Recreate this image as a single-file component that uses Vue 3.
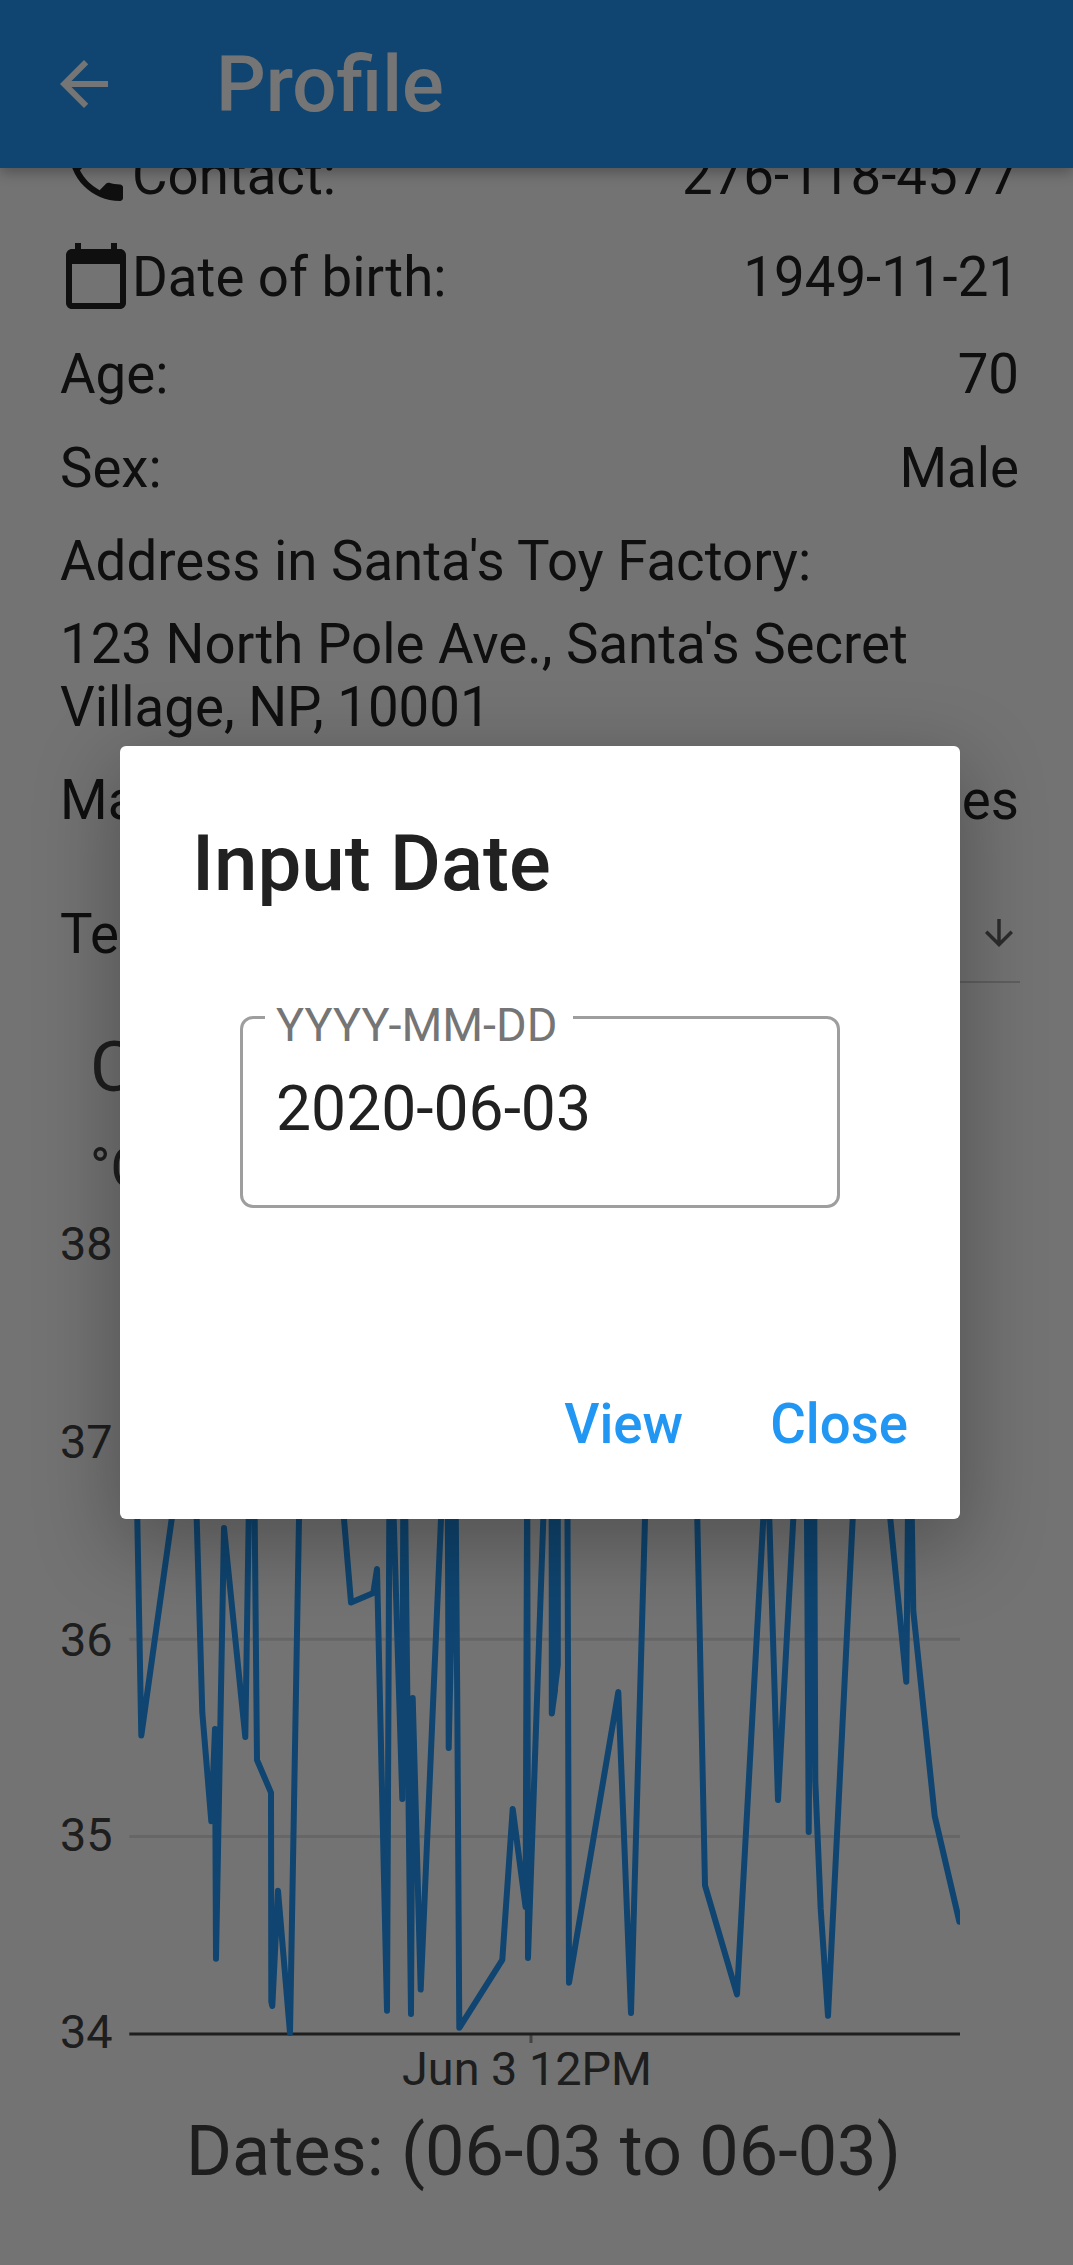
<script setup>
const details = [
  { icon: 'phone', label: 'Contact:', value: '276-118-4577' },
  { icon: 'calendar', label: 'Date of birth:', value: '1949-11-21' },
  { label: 'Age:', value: '70' },
  { label: 'Sex:', value: 'Male' },
  { label: "Address in Santa's Toy Factory:", value: '' },
]

const icons = {
  phone:
    'M6.62 10.79c1.44 2.83 3.76 5.14 6.59 6.59l2.2-2.2c.27-.27.67-.36 1.02-.24 1.12.37 2.33.57 3.57.57.55 0 1 .45 1 1V20c0 .55-.45 1-1 1-9.39 0-17-7.61-17-17 0-.55.45-1 1-1h3.5c.55 0 1 .45 1 1 0 1.25.2 2.45.57 3.57.11.35.03.74-.25 1.02l-2.2 2.2z',
  calendar:
    'M20 3h-1V1h-2v2H7V1H5v2H4c-1.1 0-2 .9-2 2v16c0 1.1.9 2 2 2h16c1.1 0 2-.9 2-2V5c0-1.1-.9-2-2-2zm0 18H4V8h16v13z',
}

const ticks = [
  { label: '38', y: 1244.4, text: 1259.6 },
  { label: '37', y: 1441.8, text: 1457.6 },
  { label: '36', y: 1639.2, text: 1655.6 },
  { label: '35', y: 1836.6, text: 1850.6 },
  { label: '34', y: 2034, text: 2048.4 },
]

const readings = [
  [135.5, 1400], [137.3, 1519], [141.3, 1735.5], [171.7, 1519], [184, 1430],
  [196.7, 1519], [202.3, 1712.6], [211.3, 1821.2], [215, 1729], [216, 1958.7],
  [224, 1528], [245.3, 1737], [248.7, 1519], [251.5, 1400], [254.7, 1519],
  [257, 1760], [271, 1792.6], [271.3, 2001.6], [272.3, 2006], [278, 1890.8],
  [290, 2033], [299, 1519], [320, 1300], [344, 1519], [351, 1602.5],
  [373.3, 1593], [377, 1569], [387, 2010.7], [389.3, 1519], [391.5, 1420],
  [393.7, 1519], [402.3, 1799], [403.2, 1519], [404.5, 1400], [405.3, 1519],
  [411, 2014], [412.7, 1698], [420.7, 1989.5], [441, 1519], [444.5, 1420],
  [447.9, 1519], [448.7, 1748], [453.8, 1519], [455, 1400], [455.8, 1519],
  [457.3, 1705], [459.3, 2027.8], [502.3, 1959.8], [512.7, 1809], [525.6, 1907],
  [527, 1519], [527.2, 1400], [527.3, 1519], [528, 1958], [543.3, 1519],
  [547, 1400], [551.7, 1519], [551.8, 1713.4], [555, 1690], [555, 1400],
  [557.8, 1519], [557.8, 1665], [551.9, 1713.4], [555, 1500], [560, 1300],
  [567.5, 1519], [569, 1982.7], [618.3, 1692], [631, 2013], [645, 1519],
  [670, 1300], [697.3, 1519], [705, 1885.3], [737, 1994.4], [763.3, 1519],
  [766.3, 1440], [769.3, 1519], [778, 1800], [793.3, 1519], [800, 1400],
  [807, 1519], [808.7, 1832], [811, 1519], [811, 1400], [814.3, 1519],
  [815.3, 1781.7], [820.7, 1909], [828, 2015.8], [852.7, 1519], [870, 1300],
  [890.3, 1519], [906.3, 1681.7], [907.9, 1519], [910, 1400], [911.8, 1519],
  [913.3, 1611], [934.7, 1816], [959.4, 1921.7],
]

const linePoints = readings.map((p) => p.join(',')).join(' ')
</script>

<template>
  <div class="screen">
    <header class="app-bar">
      <svg class="icon" viewBox="0 0 24 24">
        <path d="M20 11H7.83l5.59-5.59L12 4l-8 8 8 8 1.41-1.41L7.83 13H20v-2z" />
      </svg>
      <h1>Profile</h1>
    </header>

    <main class="body">
      <div v-for="d in details" :key="d.label" class="row">
        <svg v-if="d.icon" class="icon" viewBox="0 0 24 24"><path :d="icons[d.icon]" /></svg>
        <span>{{ d.label }}</span>
        <span class="value">{{ d.value }}</span>
      </div>
      <p class="address">123 North Pole Ave., Santa's Secret Village, NP, 10001</p>
      <div class="row maladies">
        <span>Maladies:</span>
        <span class="value">Diabetes</span>
      </div>
      <div class="picker">
        <span>Temperature</span>
        <div class="select">
          <svg viewBox="0 0 24 24"><path d="M20 12l-1.41-1.41L13 16.17V4h-2v12.17l-5.58-5.59L4 12l8 8 8-8z" /></svg>
        </div>
      </div>
      <h2>Chart</h2>
      <p class="unit">°C</p>
      <svg class="chart" viewBox="60 1200 960 905">
        <clipPath id="plot"><rect x="129" y="1200" width="831" height="840" /></clipPath>
        <line
          v-for="t in ticks.slice(0, 4)"
          :key="t.label"
          class="grid"
          x1="129.3"
          x2="960"
          :y1="t.y"
          :y2="t.y"
        />
        <line class="tick" x1="531" x2="531" y1="2035" y2="2043" />
        <line class="axis" x1="129.3" x2="960" y1="2034" y2="2034" />
        <polyline class="series" clip-path="url(#plot)" :points="linePoints" />
        <text v-for="t in ticks" :key="t.label" x="112.5" :y="t.text" text-anchor="end">{{ t.label }}</text>
        <text x="527" y="2085" text-anchor="middle">Jun 3 12PM</text>
      </svg>
      <p class="dates">Dates: (06-03 to 06-03)</p>
    </main>

    <div class="scrim">
      <section class="dialog">
        <h3>Input Date</h3>
        <div class="field">
          <label>YYYY-MM-DD</label>
          <span>2020-06-03</span>
        </div>
        <div class="actions">
          <button>View</button>
          <button>Close</button>
        </div>
      </section>
    </div>
  </div>
</template>

<style>
body {
  margin: 0;
}
</style>

<style scoped>
.screen {
  position: relative;
  display: flex;
  flex-direction: column;
  width: 1073px;
  height: 2265px;
  overflow: hidden;
  background: #fafafa;
  color: #212121;
  font-family: Roboto, sans-serif;
  font-size: 54.6px;
  line-height: 63px;
}
h1, h2, h3, p {
  margin: 0;
  font-weight: 400;
}
.icon {
  flex: none;
  width: 72px;
  height: 72px;
  fill: currentColor;
}
.app-bar {
  position: relative;
  z-index: 1;
  flex: none;
  display: flex;
  align-items: center;
  gap: 96px;
  box-sizing: border-box;
  height: 168px;
  padding-left: 48px;
  background: #2196f3;
  color: #fff;
  box-shadow: 0 4px 13px rgba(0, 0, 0, 0.3);
}
.app-bar h1 {
  font-size: 78px;
  font-weight: 500;
}
.body {
  display: flex;
  flex-direction: column;
  margin-top: -44px;
  padding: 0 53px 0 60px;
}
.row {
  display: flex;
  align-items: center;
  padding: 15.1px 0;
}
.row .icon {
  margin: -1px 0 1px;
}
.value {
  margin-left: auto;
  padding-right: 1px;
}
.address {
  margin-top: 5.5px;
  line-height: 62.5px;
}
.maladies {
  margin-top: 15.5px;
}
.picker {
  display: flex;
  align-items: center;
  justify-content: space-between;
  height: 97px;
  margin-top: 38.5px;
}
.select {
  display: flex;
  align-items: center;
  justify-content: flex-end;
  box-sizing: border-box;
  width: 560px;
  height: 97px;
  border-bottom: 2px solid #d0d0d0;
}
.select svg {
  width: 42px;
  height: 42px;
  fill: #616161;
}
h2 {
  margin: 43.5px 0 0 30px;
  color: #424242;
  font-size: 70.2px;
  line-height: 82px;
}
.unit {
  margin: 29px 0 0 30px;
  color: #424242;
}
.chart {
  width: 960px;
  height: 905px;
}
.chart text {
  fill: #424242;
  font-size: 46.8px;
}
.grid {
  stroke: #dedede;
  stroke-width: 3;
}
.axis {
  stroke: #424242;
  stroke-width: 3;
}
.tick {
  stroke: #949494;
  stroke-width: 3;
}
.series {
  fill: none;
  stroke: #2196f3;
  stroke-width: 6;
  stroke-linecap: round;
  stroke-linejoin: round;
}
.dates {
  margin-top: 5px;
  padding-left: 7px;
  color: #424242;
  font-size: 70.2px;
  line-height: 82px;
  text-align: center;
}
.scrim {
  position: absolute;
  z-index: 2;
  inset: 0;
  box-sizing: border-box;
  padding: 745.5px 0 0 120px;
  background: rgba(0, 0, 0, 0.54);
}
.dialog {
  display: flex;
  flex-direction: column;
  box-sizing: border-box;
  width: 840px;
  height: 773.5px;
  padding: 72px 37px 63px 72px;
  border-radius: 6px;
  background: #fff;
  box-shadow: 0 24px 80px 6px rgba(0, 0, 0, 0.28);
}
.dialog h3 {
  font-size: 78px;
  font-weight: 500;
  line-height: 91px;
}
.field {
  position: relative;
  box-sizing: border-box;
  width: 600px;
  height: 192px;
  margin: 107px 0 0 48px;
  padding: 53px 0 0 33px;
  border: 3px solid #9e9e9e;
  border-radius: 13px;
  font-size: 62.4px;
  line-height: 74px;
}
.field label {
  position: absolute;
  top: -21px;
  left: 22px;
  width: 308px;
  box-sizing: border-box;
  padding-left: 11px;
  background: #fff;
  color: #757575;
  font-size: 46.8px;
  line-height: 54px;
}
.actions {
  display: flex;
  justify-content: flex-end;
  gap: 87px;
  margin-top: auto;
  padding-right: 15px;
}
.actions button {
  padding: 0;
  border: 0;
  background: none;
  color: #2196f3;
  font: 500 54.6px/63px Roboto, sans-serif;
}
</style>
